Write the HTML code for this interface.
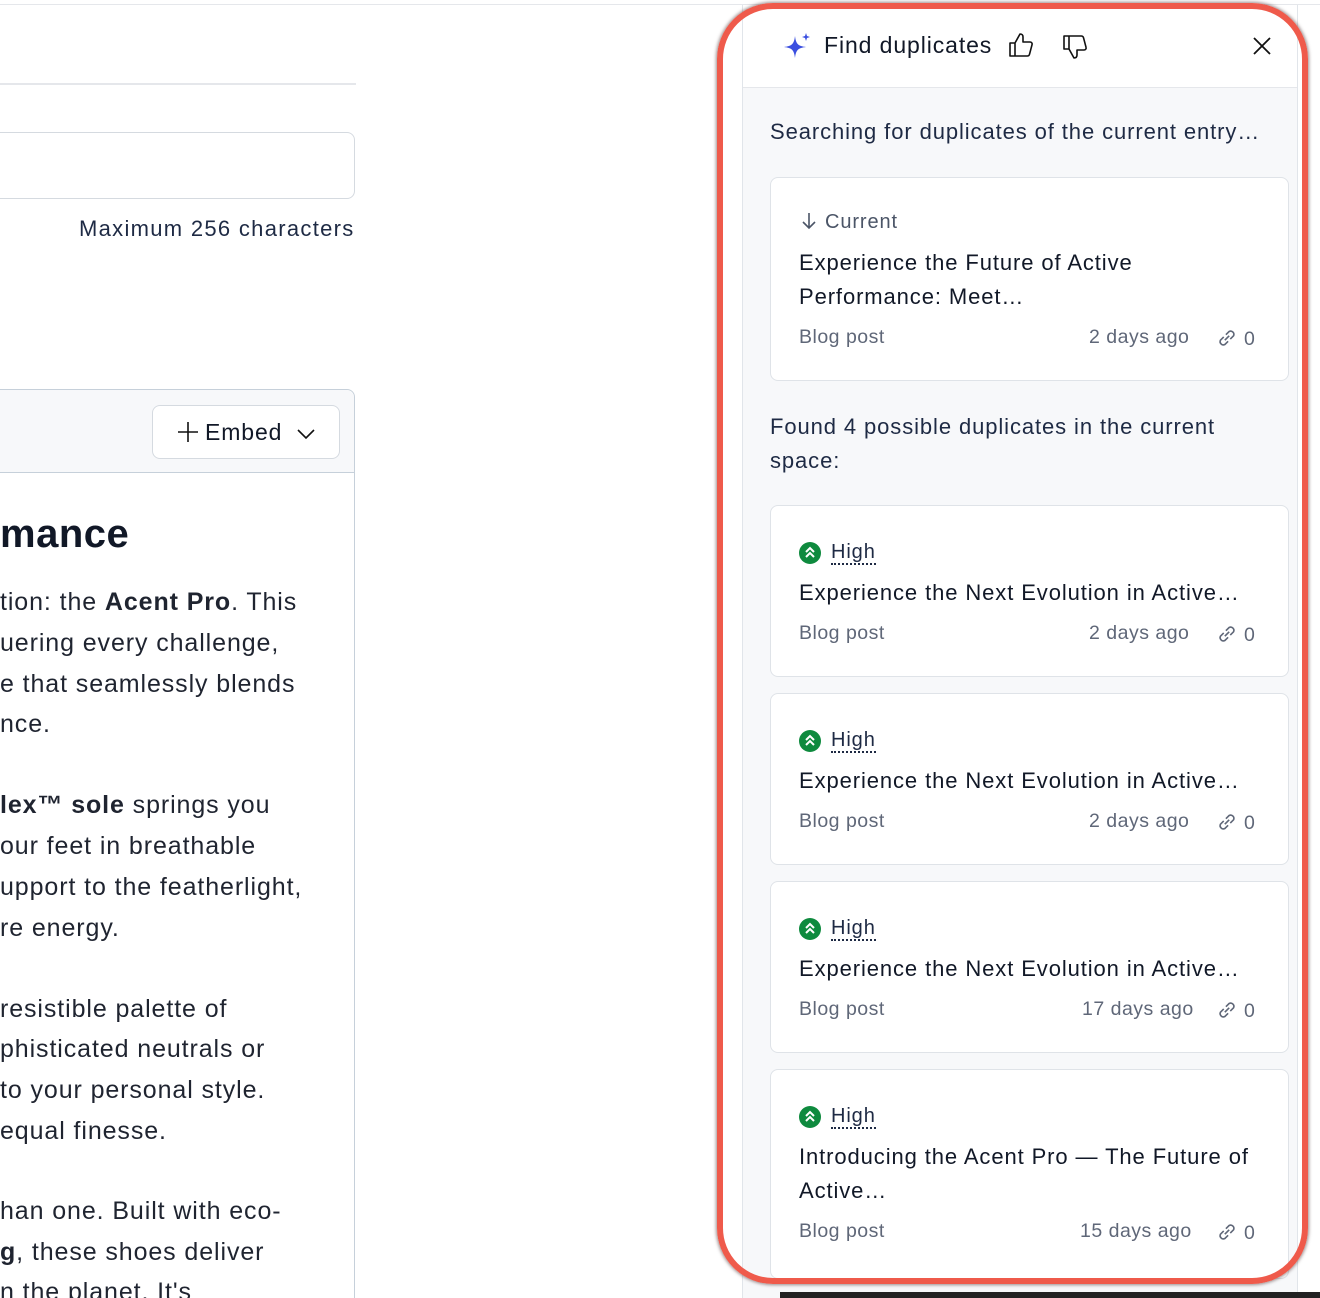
<!DOCTYPE html>
<html style="overflow:hidden;height:1298px"><head><meta charset="utf-8"><style>
*{margin:0;padding:0;box-sizing:border-box}
body{width:1320px;height:1298px;overflow:hidden;background:#fff;font-family:"Liberation Sans",sans-serif;position:relative;color:#111827;letter-spacing:0.9px}
.a{position:absolute;white-space:nowrap}
.l{font-size:25px;color:#1f2430;left:0}
.card{position:absolute;left:770px;width:519px;background:#fff;border:1.5px solid #dfe3e8;border-radius:8px}
.t{position:absolute;left:28px;font-size:22px;color:#111827}
.m{position:absolute;font-size:19.5px;color:#5f6778;letter-spacing:0.5px}
.hi{position:absolute;left:28px;font-size:20px;color:#1e2a44;display:flex;align-items:center}
.hi i{display:inline-block;width:22px;height:22px;border-radius:50%;background:#0e8a3e;margin-right:10px;position:relative}
.hi span{border-bottom:2px dotted #1e2a44;line-height:22px}
</style></head><body>
<div class="a" style="left:0;top:4px;width:1320px;height:1px;background:#e5e7eb"></div>
<div class="a" style="left:0;top:83px;width:356px;height:2px;background:#e5e7eb"></div>
<div class="a" style="left:-10px;top:132px;width:365px;height:67px;border:1.5px solid #d5dae0;border-radius:8px"></div>
<div class="a" style="left:79px;top:216px;font-size:22px;color:#1e2a44;letter-spacing:1.3px">Maximum 256 characters</div>
<div class="a" style="left:-10px;top:389px;width:365px;height:960px;border:1.5px solid #c6d0da;border-radius:8px"></div>
<div class="a" style="left:-9px;top:390px;width:363px;height:83px;background:#f7f8fa;border-bottom:1.5px solid #c6d0da;border-radius:8px 8px 0 0"></div>
<div class="a" style="left:152px;top:405px;width:188px;height:54px;border:1.5px solid #d5dae0;border-radius:8px;background:#fff;font-size:23px;color:#111827;padding:13px 0 0 24px">
<svg width="22" height="22" viewBox="0 0 22 22" style="vertical-align:-3px;margin-right:6px"><path d="M11 1v20M1 11h20" stroke="#111" stroke-width="1.6"/></svg>Embed
<svg width="20" height="12" viewBox="0 0 20 12" style="margin-left:6px"><path d="M2 2l8 8 8-8" stroke="#111" stroke-width="1.6" fill="none"/></svg></div>
<div class="a" style="left:0;top:512px;font-size:40px;font-weight:bold;color:#111827;letter-spacing:0.5px">mance</div>
<div class="a l" style="top:588px">tion: the <b>Acent Pro</b>. This</div>
<div class="a l" style="top:629px">uering every challenge,</div>
<div class="a l" style="top:670px">e that seamlessly blends</div>
<div class="a l" style="top:710px">nce.</div>
<div class="a l" style="top:791px"><b>lex™ sole</b> springs you</div>
<div class="a l" style="top:832px">our feet in breathable</div>
<div class="a l" style="top:873px">upport to the featherlight,</div>
<div class="a l" style="top:914px">re energy.</div>
<div class="a l" style="top:995px">resistible palette of</div>
<div class="a l" style="top:1035px">phisticated neutrals or</div>
<div class="a l" style="top:1076px">to your personal style.</div>
<div class="a l" style="top:1117px">equal finesse.</div>
<div class="a l" style="top:1197px">han one. Built with eco-</div>
<div class="a l" style="top:1238px"><b>g</b>, these shoes deliver</div>
<div class="a l" style="top:1278px">n the planet. It's</div>

<div class="a" style="left:742px;top:5px;width:556px;height:1293px;background:#f7f8fa;border-left:1.5px solid #e1e5ea;border-right:1.5px solid #e1e5ea"></div>
<div class="a" style="left:743px;top:5px;width:554px;height:83px;background:#fff;border-bottom:1.5px solid #e5e7eb"></div>
<svg class="a" style="left:782px;top:32px" width="30" height="28" viewBox="0 0 30 28"><path d="M13 4 C14 12 16 14 24 15 C16 16 14 18 13 26 C12 18 10 16 2 15 C10 14 12 12 13 4Z" fill="#3b4fe0"/><path d="M24 1 L25 4 L28 5 L25 6 L24 9 L23 6 L20 5 L23 4Z" fill="#3b4fe0"/></svg>
<div class="a" style="left:824px;top:32px;font-size:23px;color:#111827">Find duplicates</div>
<svg class="a" style="left:1008px;top:32px" width="26" height="26" viewBox="0 0 26 26" fill="none" stroke="#111" stroke-width="1.6" stroke-linejoin="round"><path d="M2 11h5v13H2zM7 11l5-9c2 0 3 1 3 3v5h7c1.5 0 2.5 1.3 2 2.8l-2.5 9.5c-.3 1-1.2 1.7-2.2 1.7H7"/></svg>
<svg class="a" style="left:1062px;top:34px" width="26" height="26" viewBox="0 0 26 26" fill="none" stroke="#111" stroke-width="1.6" stroke-linejoin="round"><path d="M2 2h5v13H2zM7 15l5 9c2 0 3-1 3-3v-5h7c1.5 0 2.5-1.3 2-2.8L21.5 3.7C21.2 2.7 20.3 2 19.3 2H7"/></svg>
<svg class="a" style="left:1252px;top:36px" width="20" height="20" viewBox="0 0 20 20"><path d="M2 2l16 16M18 2L2 18" stroke="#111" stroke-width="1.8"/></svg>
<div class="a" style="left:770px;top:119px;font-size:22px;color:#1e2a44">Searching for duplicates of the current entry…</div>

<div class="card" style="top:177px;height:204px">
<div class="a" style="left:28px;top:33px;font-size:20px;color:#4b5567"><svg width="20" height="20" viewBox="0 0 20 20" style="vertical-align:-3px;margin-right:6px"><path d="M10 2v15M4 11l6 6 6-6" stroke="#4b5567" stroke-width="1.6" fill="none"/></svg>Current</div>
<div class="t" style="top:68px;line-height:34px">Experience the Future of Active<br>Performance: Meet…</div>
<div class="m" style="left:28px;top:148px">Blog post</div>
<div class="m" style="left:318px;top:148px">2 days ago</div>
<div class="m" style="left:444px;top:148px"><svg width="24" height="24" viewBox="0 0 22 22" style="vertical-align:-5px;margin-right:5px" fill="none" stroke="#5f6778" stroke-width="1.5"><path d="M9 13l4-4M8 10l-3 3a3 3 0 004 4l3-3M14 12l3-3a3 3 0 00-4-4l-3 3"/></svg>0</div>
</div>

<div class="a" style="left:770px;top:410px;font-size:22px;color:#1e2a44;line-height:34px">Found 4 possible duplicates in the current<br>space:</div>

<div class="card" style="top:505px;height:172px">
<div class="hi" style="top:35px"><i><svg width="22" height="22" viewBox="0 0 22 22" style="position:absolute;left:0;top:0"><path d="M7 10l4-4 4 4M7 15l4-4 4 4" stroke="#fff" stroke-width="2" fill="none"/></svg></i><span>High</span></div>
<div class="t" style="top:74px">Experience the Next Evolution in Active…</div>
<div class="m" style="left:28px;top:116px">Blog post</div>
<div class="m" style="left:318px;top:116px">2 days ago</div>
<div class="m" style="left:444px;top:116px"><svg width="24" height="24" viewBox="0 0 22 22" style="vertical-align:-5px;margin-right:5px" fill="none" stroke="#5f6778" stroke-width="1.5"><path d="M9 13l4-4M8 10l-3 3a3 3 0 004 4l3-3M14 12l3-3a3 3 0 00-4-4l-3 3"/></svg>0</div>
</div>
<div class="card" style="top:693px;height:172px">
<div class="hi" style="top:35px"><i><svg width="22" height="22" viewBox="0 0 22 22" style="position:absolute;left:0;top:0"><path d="M7 10l4-4 4 4M7 15l4-4 4 4" stroke="#fff" stroke-width="2" fill="none"/></svg></i><span>High</span></div>
<div class="t" style="top:74px">Experience the Next Evolution in Active…</div>
<div class="m" style="left:28px;top:116px">Blog post</div>
<div class="m" style="left:318px;top:116px">2 days ago</div>
<div class="m" style="left:444px;top:116px"><svg width="24" height="24" viewBox="0 0 22 22" style="vertical-align:-5px;margin-right:5px" fill="none" stroke="#5f6778" stroke-width="1.5"><path d="M9 13l4-4M8 10l-3 3a3 3 0 004 4l3-3M14 12l3-3a3 3 0 00-4-4l-3 3"/></svg>0</div>
</div>
<div class="card" style="top:881px;height:172px">
<div class="hi" style="top:35px"><i><svg width="22" height="22" viewBox="0 0 22 22" style="position:absolute;left:0;top:0"><path d="M7 10l4-4 4 4M7 15l4-4 4 4" stroke="#fff" stroke-width="2" fill="none"/></svg></i><span>High</span></div>
<div class="t" style="top:74px">Experience the Next Evolution in Active…</div>
<div class="m" style="left:28px;top:116px">Blog post</div>
<div class="m" style="left:311px;top:116px">17 days ago</div>
<div class="m" style="left:444px;top:116px"><svg width="24" height="24" viewBox="0 0 22 22" style="vertical-align:-5px;margin-right:5px" fill="none" stroke="#5f6778" stroke-width="1.5"><path d="M9 13l4-4M8 10l-3 3a3 3 0 004 4l3-3M14 12l3-3a3 3 0 00-4-4l-3 3"/></svg>0</div>
</div>
<div class="card" style="top:1069px;height:210px">
<div class="hi" style="top:35px"><i><svg width="22" height="22" viewBox="0 0 22 22" style="position:absolute;left:0;top:0"><path d="M7 10l4-4 4 4M7 15l4-4 4 4" stroke="#fff" stroke-width="2" fill="none"/></svg></i><span>High</span></div>
<div class="t" style="top:70px;line-height:34px">Introducing the Acent Pro — The Future of<br>Active…</div>
<div class="m" style="left:28px;top:150px">Blog post</div>
<div class="m" style="left:309px;top:150px">15 days ago</div>
<div class="m" style="left:444px;top:150px"><svg width="24" height="24" viewBox="0 0 22 22" style="vertical-align:-5px;margin-right:5px" fill="none" stroke="#5f6778" stroke-width="1.5"><path d="M9 13l4-4M8 10l-3 3a3 3 0 004 4l3-3M14 12l3-3a3 3 0 00-4-4l-3 3"/></svg>0</div>
</div>

<div class="a" style="left:780px;top:1292px;width:540px;height:6px;background:#222"></div>
<div class="a" style="left:717px;top:3px;width:591px;height:1281px;border:6px solid #ef5a4b;border-radius:56px;box-shadow:0 0 3px 1px rgba(60,30,30,.5)"></div>
</body></html>
